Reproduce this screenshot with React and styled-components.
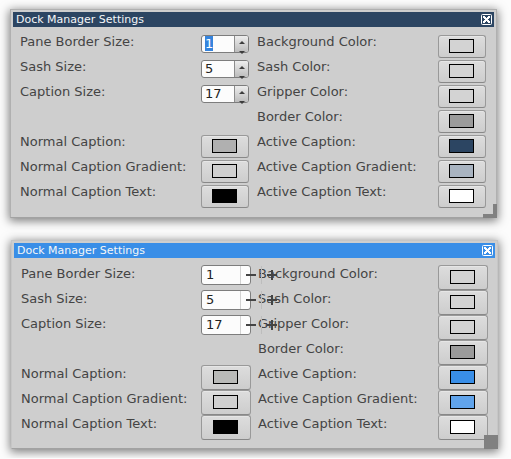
import React, { useEffect, useRef, useState } from "react";
import styled, { createGlobalStyle, ThemeProvider } from "styled-components";

const GlobalStyle = createGlobalStyle`
  *, *::before, *::after { box-sizing: border-box; }
  body {
    margin: 0;
    background: #fcfcfc;
    font-family: "DejaVu Sans", sans-serif;
    font-size: 13px;
    color: #444444;
  }
  button, input { font: inherit; margin: 0; padding: 0; border: 0; }
`;

const compact = {
  caption: "#2c4562",
  frame: "#b0b0b0",
  page: "0 14px 0 10px",
  body: "8px 8px 5px 7px",
  columns: "minmax(0, 1fr) 56px minmax(0, 1fr) 48px",
  labelHeight: "14px",
  spinWidth: "48px",
  spinHeight: "18px",
  buttonHeight: "23px",
  buttonPadding: "3px 10px",
};

const roomy = {
  caption: "#398ee7",
  frame: "#c6c6c6",
  page: "0 13px 0 11px",
  body: "7px 7px 6px 7px",
  columns: "minmax(0, 1fr) 57px minmax(0, 1fr) 50px",
  labelHeight: "17px",
  spinWidth: "50px",
  spinHeight: "20px",
  buttonHeight: "25px",
  buttonPadding: "4px 11px",
};

const Page = styled.main`
  display: flex;
  flex-direction: column;
  gap: 22px;
  padding: 9px 0;
`;

const Dialog = styled.section`
  position: relative;
  margin: ${({ theme }) => theme.page};
  padding: 2px;
  border: 1px solid ${({ theme }) => theme.frame};
  border-bottom-color: #a2a2a2;
  background: #cecece;
  box-shadow: 0 2px 9px 1px rgba(0, 0, 0, 0.5);
`;

const Caption = styled.header`
  display: flex;
  align-items: center;
  justify-content: space-between;
  height: 15px;
  padding: 0 2px 0 3px;
  background: ${({ theme }) => theme.caption};
`;

const Title = styled.h2`
  margin: 0;
  font-size: 11px;
  font-weight: 400;
  line-height: 15px;
  color: #f4f6f8;
`;

const CloseButton = styled.button`
  display: flex;
  background: none;
`;

const Settings = styled.form`
  display: grid;
  grid-template-columns: ${({ theme }) => theme.columns};
  grid-auto-rows: 25px;
  align-items: start;
  padding: ${({ theme }) => theme.body};
`;

const Label = styled.label`
  grid-column-start: ${({ $column }) => $column};
  line-height: ${({ theme }) => theme.labelHeight};
  white-space: nowrap;
`;

const SpinBox = styled.div`
  position: relative;
  width: ${({ theme }) => theme.spinWidth};
  height: ${({ theme }) => theme.spinHeight};
  border: 1px solid #7d7d7d;
  border-radius: 3px;
  background: #fcfcfc;
`;

const SpinInput = styled.input`
  display: block;
  width: ${({ $wide }) => ($wide ? "38px" : "33px")};
  height: 100%;
  padding-bottom: 1px;
  padding-left: ${({ $wide }) => ($wide ? "4px" : "3px")};
  border-right: ${({ $wide }) => ($wide ? "0" : "1px solid #8c8c8c")};
  border-radius: 2px 0 0 2px;
  background: transparent;
  color: #222222;
  line-height: 14px;
  outline: none;
  &::selection { background: #3584dd; color: #ffffff; }
`;

const ArrowColumn = styled.div`
  position: absolute;
  top: 0;
  right: 0;
  width: 13px;
  height: 16px;
  display: flex;
  flex-direction: column;
  gap: 4px;
  border-radius: 0 2px 2px 0;
  background: linear-gradient(#ededed, #bcbcbc);
`;

const ArrowButton = styled.button`
  display: flex;
  flex: none;
  justify-content: center;
  padding-top: ${({ $first }) => ($first ? "5px" : "3px")};
  background: none;
`;

const StepRow = styled.div`
  position: absolute;
  z-index: 1;
  top: 0;
  left: 38px;
  display: flex;
  height: 18px;
`;

const StepButton = styled.button`
  display: flex;
  align-items: center;
  width: 21px;
  padding-left: 5px;
  border-left: 1px solid ${({ $outer }) => ($outer ? "#bdbdbd" : "#d2d2d2")};
  background: none;
`;

const ColorButton = styled.button`
  display: flex;
  width: 100%;
  height: ${({ theme }) => theme.buttonHeight};
  padding: ${({ theme }) => theme.buttonPadding};
  border: 1px solid #999999;
  border-bottom-color: #888888;
  border-radius: 3px;
  background: linear-gradient(#dddddd, #cdcdcd);
  box-shadow: inset 0 1px 0 #e6e6e6;
`;

const ColorCell = styled.div`
  width: ${({ theme }) => theme.spinWidth};
`;

const Swatch = styled.span`
  width: 25px;
  height: 14px;
  border: 1px solid #000000;
  background: ${({ $color }) => $color};
`;

const CornerGrip = styled.div`
  position: absolute;
  right: -1px;
  bottom: -1px;
  width: 14px;
  height: 14px;
  border: solid #808080;
  border-width: 0 4px 4px 0;
`;

const BlockGrip = styled(CornerGrip)`
  border: 0;
  background: #808080;
`;

function CloseIcon() {
  return (
    <svg width="11" height="11" viewBox="0 0 11 11" aria-hidden="true">
      <rect x="0.5" y="0.5" width="10" height="10" rx="1" fill="none" stroke="#fff" />
      <path
        fill="#fff"
        shapeRendering="crispEdges"
        d="M2 2h2v1h1v1h1v-1h1v-1h2v2h-1v1h-1v1h1v1h1v2h-2v-1h-1v-1h-1v1h-1v1h-2v-2h1v-1h1v-1h-1v-1h-1z"
      />
    </svg>
  );
}

function Arrow({ down }) {
  return (
    <svg width="6" height="3" viewBox="0 0 6 3" aria-hidden="true">
      <path d={down ? "M0 0h6L3 3z" : "M0 3h6L3 0z"} fill="#3c3c3c" />
    </svg>
  );
}

function Sign({ plus }) {
  return (
    <svg width="10" height="10" viewBox="0 0 10 10" aria-hidden="true">
      <path d={plus ? "M0 5h10M5 0v10" : "M0 5h10"} stroke="#444" strokeWidth="2" fill="none" />
    </svg>
  );
}

function Spinner({ id, initial, selected, wide }) {
  const [value, setValue] = useState(initial);
  const input = useRef(null);
  useEffect(() => {
    if (selected) {
      input.current.focus();
      input.current.select();
    }
  }, [selected]);
  const step = (amount) => setValue((v) => Math.max(0, Number(v) + amount));
  return (
    <SpinBox>
      <SpinInput
        id={id}
        ref={input}
        type="text"
        inputMode="numeric"
        $wide={wide}
        value={value}
        onChange={(e) => setValue(e.target.value)}
      />
      {wide ? (
        <StepRow>
          <StepButton type="button" aria-label="Decrease" onClick={() => step(-1)}>
            <Sign />
          </StepButton>
          <StepButton type="button" aria-label="Increase" $outer onClick={() => step(1)}>
            <Sign plus />
          </StepButton>
        </StepRow>
      ) : (
        <ArrowColumn>
          <ArrowButton type="button" aria-label="Increase" $first onClick={() => step(1)}>
            <Arrow />
          </ArrowButton>
          <ArrowButton type="button" aria-label="Decrease" onClick={() => step(-1)}>
            <Arrow down />
          </ArrowButton>
        </ArrowColumn>
      )}
    </SpinBox>
  );
}

function ColorField({ id, label, color, column }) {
  return (
    <>
      <Label htmlFor={id} $column={column}>{label}</Label>
      <ColorCell>
        <ColorButton id={id} type="button">
          <Swatch $color={color} />
        </ColorButton>
      </ColorCell>
    </>
  );
}

function DockSettings({ name, theme, colors, wide }) {
  const spin = (key, label, initial, selected) => (
    <>
      <Label htmlFor={`${name}-${key}`} $column={1}>{label}</Label>
      <Spinner id={`${name}-${key}`} initial={initial} selected={selected} wide={wide} />
    </>
  );
  const color = (key, label, column) => (
    <ColorField id={`${name}-${key}`} label={label} color={colors[key]} column={column} />
  );
  return (
    <ThemeProvider theme={theme}>
      <Dialog aria-labelledby={`${name}-title`}>
        <Caption>
          <Title id={`${name}-title`}>Dock Manager Settings</Title>
          <CloseButton type="button" aria-label="Close">
            <CloseIcon />
          </CloseButton>
        </Caption>
        <Settings>
          {spin("pane", "Pane Border Size:", "1", !wide)}
          {color("background", "Background Color:", 3)}
          {spin("sashSize", "Sash Size:", "5")}
          {color("sash", "Sash Color:", 3)}
          {spin("captionSize", "Caption Size:", "17")}
          {color("gripper", "Gripper Color:", 3)}
          {color("border", "Border Color:", 3)}
          {color("normal", "Normal Caption:", 1)}
          {color("active", "Active Caption:", 3)}
          {color("normalGradient", "Normal Caption Gradient:", 1)}
          {color("activeGradient", "Active Caption Gradient:", 3)}
          {color("normalText", "Normal Caption Text:", 1)}
          {color("activeText", "Active Caption Text:", 3)}
        </Settings>
        {wide ? <BlockGrip /> : <CornerGrip />}
      </Dialog>
    </ThemeProvider>
  );
}

const sharedColors = {
  background: "#d3d3d3",
  sash: "#d3d3d3",
  gripper: "#d3d3d3",
  border: "#9b9b9b",
  normalGradient: "#d0d0d0",
  normalText: "#000000",
  activeText: "#ffffff",
};

const navyColors = { ...sharedColors, normal: "#b0b0b0", active: "#2c4562", activeGradient: "#a9b4c1" };
const blueColors = { ...sharedColors, normal: "#b9bab8", active: "#398ee7", activeGradient: "#61a4eb" };

export default function App() {
  return (
    <>
      <GlobalStyle />
      <Page>
        <DockSettings name="navy" theme={compact} colors={navyColors} />
        <DockSettings name="blue" theme={roomy} colors={blueColors} wide />
      </Page>
    </>
  );
}
